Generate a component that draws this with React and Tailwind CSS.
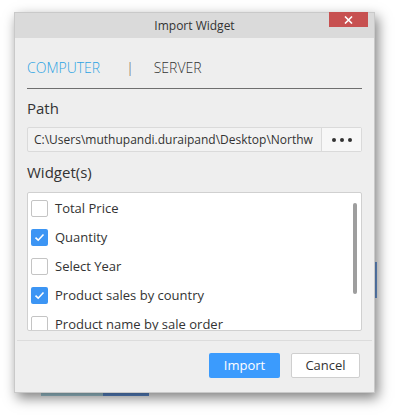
import React from "react";

const items = [
  { label: "Total Price", checked: false },
  { label: "Quantity", checked: true },
  { label: "Select Year", checked: false },
  { label: "Product sales by country", checked: true },
  { label: "Product name by sale order", checked: false },
];

function CheckBox({ checked }) {
  if (checked) {
    return (
      <div className="w-[17px] h-[17px] rounded-[2px] bg-[#3c95f4] flex items-center justify-center shrink-0">
        <svg width="11" height="9" viewBox="0 0 11 9">
          <path d="M1.5 4.6 L4.2 7.2 L9.5 1.5" fill="none" stroke="#fff" strokeWidth="1.6" />
        </svg>
      </div>
    );
  }
  return <div className="w-[17px] h-[17px] rounded-[2px] bg-white border border-[#c4c4c4] shrink-0" />;
}

export default function App() {
  return (
    <div className="w-[395px] h-[415px] bg-white relative overflow-hidden" style={{ fontFamily: "'Open Sans', 'Noto Sans', sans-serif" }}>
      {/* app behind the dialog */}
      <div className="absolute left-[41px] top-[392px] w-[104px] h-[4px] bg-[#a9d3e0]" />
      <div className="absolute left-[103px] top-[392px] w-[46px] h-[4px] bg-[#5e8fd6]" />
      <div className="absolute left-[374px] top-[262px] w-[3px] h-[36px] bg-[#6f9ee0]" />

      <div className="relative ml-[14px] mt-[12px] w-[361px] h-[381px] bg-[#eeeeee] border border-[#c9c9c9] shadow-[3px_5px_12px_rgba(0,0,0,0.5)]">
        {/* title bar */}
        <div className="relative h-[25px] bg-[#dadada] flex items-center justify-center text-[12px] font-medium text-[#333]">
          Import Widget
          <div className="absolute right-[6px] top-[-1px] w-[39px] h-[15px] bg-[#c75050] flex items-center justify-center">
            <svg width="9" height="8" viewBox="0 0 9 8">
              <path d="M1 0.5 L8 7.5 M8 0.5 L1 7.5" stroke="#fff" strokeWidth="1.6" />
            </svg>
          </div>
        </div>

        <div className="px-[12px]">
          {/* tabs */}
          <div className="h-[50px] pt-[20px] flex items-start text-[14px] font-light">
            <span className="text-[#2ba3e3] leading-[20px]">COMPUTER</span>
            <span className="text-[#555] leading-[20px] ml-[26px]">|</span>
            <span className="text-[#333] leading-[20px] ml-[20px]">SERVER</span>
          </div>
          <div className="h-px bg-[#6e6e6e]" />

          {/* path */}
          <div className="h-[38px] flex items-center text-[15px] text-[#333]">Path</div>
          <div className="h-[25px] flex border border-[#dadada] rounded-[2px] bg-[#f2f2f2]">
            <div className="flex-1 flex items-center pl-[6px] text-[12px] text-[#333] overflow-hidden whitespace-nowrap">
              C:\Users\muthupandi.duraipand\Desktop\Northw
            </div>
            <div className="w-[40px] border-l border-[#dadada] bg-[#f7f7f7] flex items-center justify-center gap-[4px]">
              <span className="w-[4px] h-[4px] rounded-full bg-[#333]" />
              <span className="w-[4px] h-[4px] rounded-full bg-[#333]" />
              <span className="w-[4px] h-[4px] rounded-full bg-[#333]" />
            </div>
          </div>

          {/* widgets */}
          <div className="h-[40px] flex items-center text-[15px] text-[#333]">Widget(s)</div>
          <div className="relative h-[139px] bg-white border border-[#d0d0d0] rounded-[2px] overflow-hidden">
            <div className="pt-[7px] pl-[3px] flex flex-col gap-[12px]">
              {items.map((it) => (
                <div key={it.label} className="flex items-center h-[17px]">
                  <CheckBox checked={it.checked} />
                  <span className="ml-[7px] text-[13px] text-[#333] whitespace-nowrap">{it.label}</span>
                </div>
              ))}
            </div>
            <div className="absolute right-[4px] top-[10px] w-[4px] h-[91px] rounded-full bg-[#9e9e9e]" />
          </div>
        </div>

        {/* footer */}
        <div className="mt-[9px] mx-[2px] h-px bg-[#dcdcdc]" />
        <div className="flex justify-end gap-[11px] pr-[14px] pt-[12px]">
          <button className="w-[71px] h-[25px] rounded-[2px] bg-[#3b9bfd] text-white text-[13px]">Import</button>
          <button className="w-[69px] h-[25px] rounded-[2px] bg-white border border-[#cfcfcf] text-[#333] text-[13px]">Cancel</button>
        </div>
      </div>
    </div>
  );
}
